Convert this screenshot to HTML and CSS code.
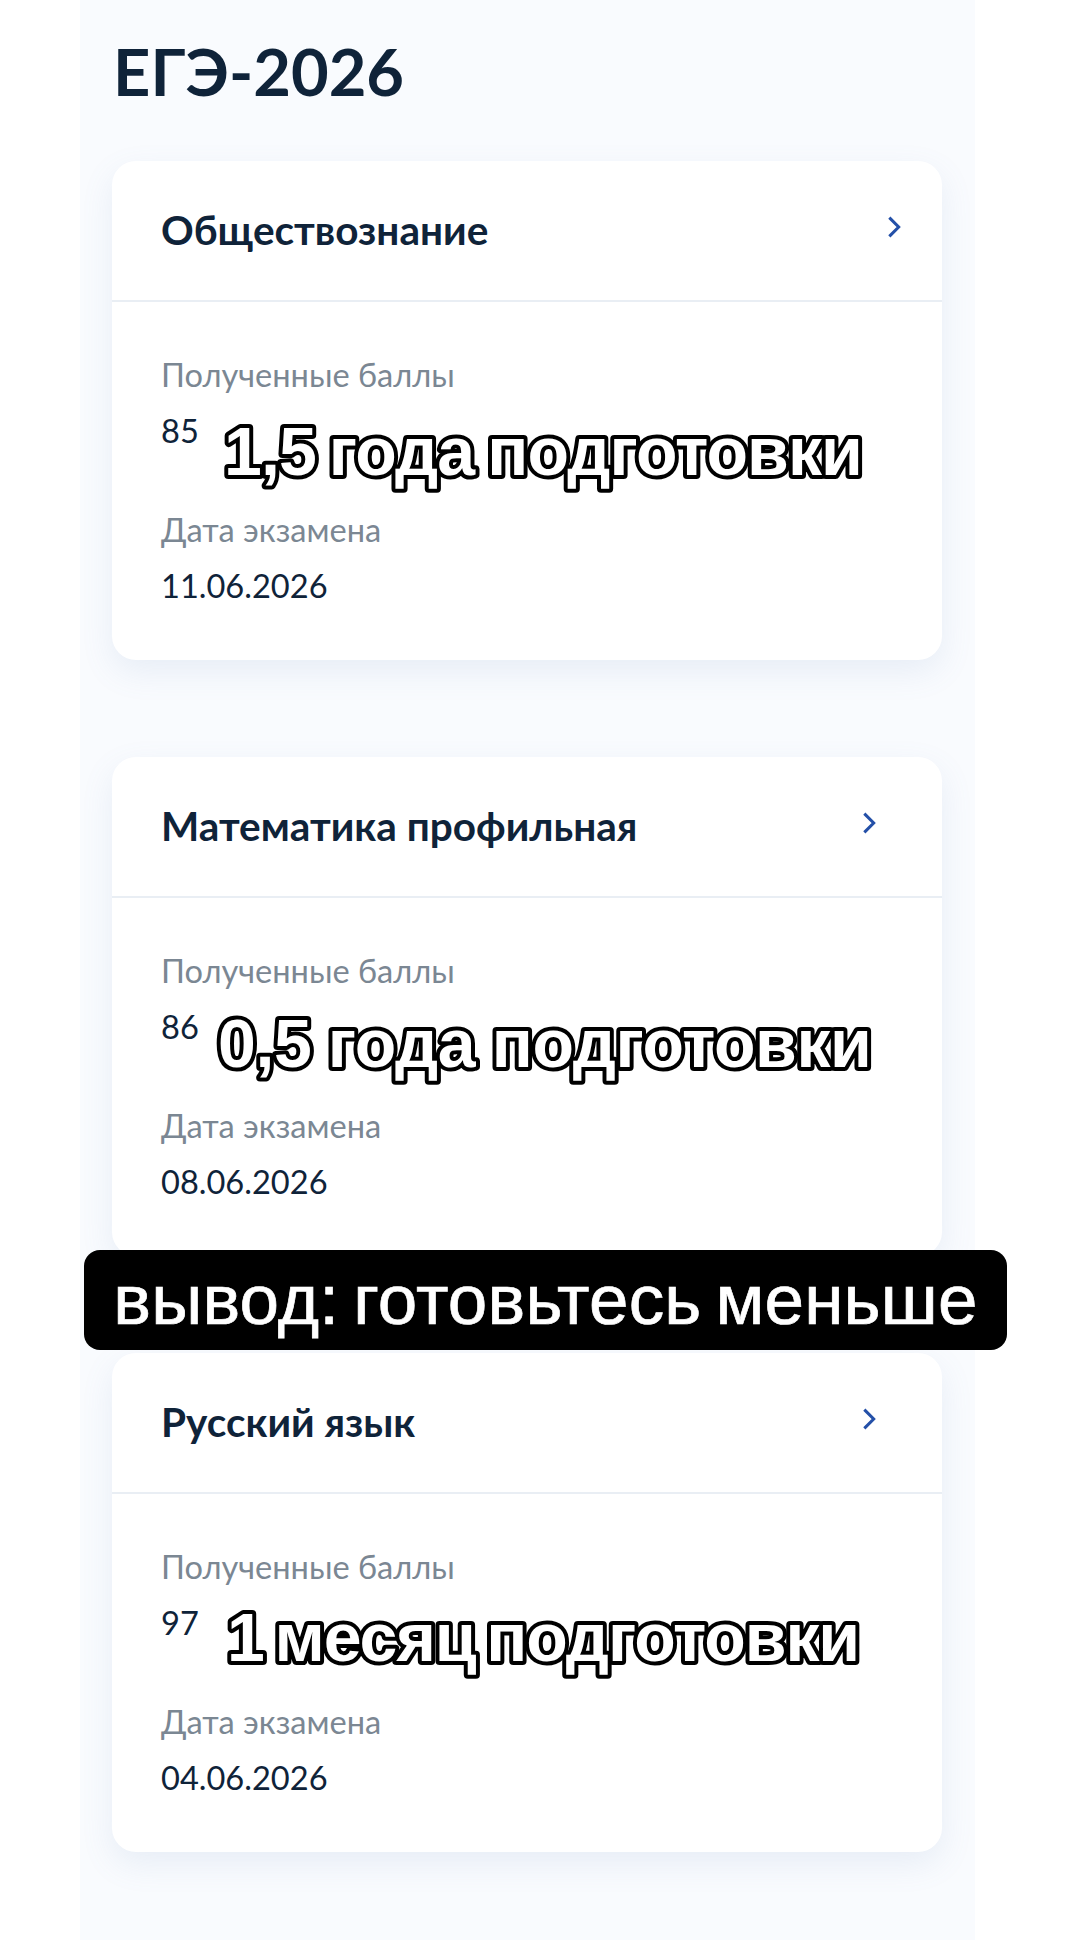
FILE: index.html
```html
<!DOCTYPE html>
<html lang="ru">
<head>
    <meta charset="UTF-8">
    <meta name="viewport" content="width=device-width, initial-scale=1.0">
    <title>ЕГЭ-2026</title>
    <link rel="stylesheet" href="styles.css">
</head>
<body>

<div class="page">
    <h1>ЕГЭ-2026</h1>

    <div class="card">
        <div class="card-head">
            <span class="subject">Обществознание</span>
            <svg class="chevron chevron-far" viewBox="0 0 12 20"><path d="M2 2l8 8-8 8"/></svg>
        </div>
        <div class="card-body">
            <div class="label">Полученные баллы</div>
            <div class="value score">85</div>
            <div class="label">Дата экзамена</div>
            <div class="value">11.06.2026</div>
        </div>
        <svg class="sticker"><text class="sticker-one" x="112" y="314">1,5 года подготовки</text></svg>
    </div>

    <div class="card">
        <div class="card-head">
            <span class="subject">Математика профильная</span>
            <svg class="chevron" viewBox="0 0 12 20"><path d="M2 2l8 8-8 8"/></svg>
        </div>
        <div class="card-body">
            <div class="label">Полученные баллы</div>
            <div class="value score">86</div>
            <div class="label">Дата экзамена</div>
            <div class="value">08.06.2026</div>
        </div>
        <svg class="sticker"><text class="sticker-two" x="106" y="310">0,5 года подготовки</text></svg>
    </div>

    <div class="card">
        <div class="card-head">
            <span class="subject">Русский язык</span>
            <svg class="chevron" viewBox="0 0 12 20"><path d="M2 2l8 8-8 8"/></svg>
        </div>
        <div class="card-body">
            <div class="label">Полученные баллы</div>
            <div class="value score">97</div>
            <div class="label">Дата экзамена</div>
            <div class="value">04.06.2026</div>
        </div>
        <svg class="sticker"><text class="sticker-three" x="115" y="308">1 месяц подготовки</text></svg>
    </div>

    <div class="banner">вывод: готовьтесь меньше</div>
</div>

</body>
</html>
```

FILE: styles.css
```css
html, body {
    margin: 0;
    padding: 0;
    background-color: #fff;
}
body {
    font-family: Lato, "Open Sans", sans-serif;
    color: #0f2339;
}
.page {
    position: relative;
    box-sizing: border-box;
    width: 895px;
    height: 1940px;
    margin-left: 80px;
    padding: 32px 33px 0 32px;
    background-color: #f9fbfe;
}
h1 {
    margin: 0 0 51px 1px;
    font-size: 65px;
    line-height: 78px;
    font-weight: 700;
}
.card {
    position: relative;
    height: 499px;
    margin-bottom: 97px;
    background-color: #fff;
    border-radius: 24px;
    box-shadow: 0 12px 32px rgba(105, 140, 190, 0.12);
}
.card-head {
    display: flex;
    align-items: center;
    justify-content: space-between;
    box-sizing: border-box;
    height: 141px;
    padding: 0 66px 0 49px;
    border-bottom: 2px solid #e9eef4;
}
.subject {
    margin-top: -2px;
    font-size: 40.5px;
    font-weight: 700;
}
.chevron {
    width: 14px;
    height: 24px;
    margin-top: -8px;
    fill: none;
    stroke: #2450a8;
    stroke-width: 2.6;
}
.chevron-far {
    margin-right: -25px;
}
.card-body {
    padding: 54px 49px 0;
}
.label {
    font-size: 32.6px;
    line-height: 38px;
    color: #7b8793;
}
.value {
    margin-top: 18px;
    font-size: 32.6px;
    line-height: 38px;
}
.score {
    margin-bottom: 61px;
}
/* svg text because html text-stroke has no round joins */
.sticker {
    position: absolute;
    left: 0;
    top: 0;
    width: 100%;
    height: 100%;
    overflow: visible;
}
.sticker text {
    font-family: "Liberation Sans", Arial, sans-serif;
    font-size: 68px;
    font-weight: 700;
    fill: #fff;
    stroke: #000;
    stroke-width: 8px;
    stroke-linejoin: round;
    paint-order: stroke fill;
}
.sticker-one {
    letter-spacing: -0.9px;
    word-spacing: -5px;
}
.sticker-two {
    letter-spacing: -0.4px;
    word-spacing: -2px;
}
.sticker-three {
    letter-spacing: -1.1px;
    word-spacing: -7px;
}
.banner {
    position: absolute;
    left: 4px;
    top: 1250px;
    width: 923px;
    height: 100px;
    border-radius: 16px;
    background-color: #000;
    color: #fff;
    font-family: "Liberation Sans", Arial, sans-serif;
    font-size: 71px;
    line-height: 100px;
    letter-spacing: 0.2px;
    word-spacing: -6px;
    text-align: center;
    -webkit-text-stroke: 0.7px #fff;
}
```
